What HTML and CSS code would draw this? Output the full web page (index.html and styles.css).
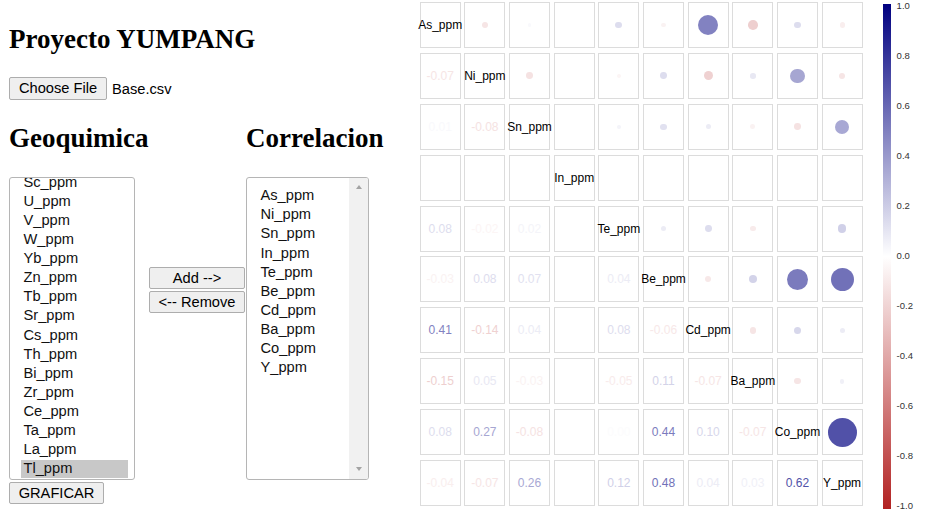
FILE: index.html
```html
<!DOCTYPE html>
<html lang="es">
<head>
<meta charset="utf-8">
<title>Proyecto YUMPANG</title>
<link rel="stylesheet" href="styles.css">
</head>
<body>
<div class="page">
  <div class="left">
    <h1 class="title">Proyecto YUMPANG</h1>
    <div class="file-row">
      <button class="btn btn-file">Choose File</button>
      <span class="file-name">Base.csv</span>
    </div>
    <div class="panel">
      <h2 class="heading">Geoquimica</h2>
      <div></div>
      <h2 class="heading">Correlacion</h2>

      <div class="listbox listbox-left">
        <ul class="options">
          <li class="opt">Sc_ppm</li>
          <li class="opt">U_ppm</li>
          <li class="opt">V_ppm</li>
          <li class="opt">W_ppm</li>
          <li class="opt">Yb_ppm</li>
          <li class="opt">Zn_ppm</li>
          <li class="opt">Tb_ppm</li>
          <li class="opt">Sr_ppm</li>
          <li class="opt">Cs_ppm</li>
          <li class="opt">Th_ppm</li>
          <li class="opt">Bi_ppm</li>
          <li class="opt">Zr_ppm</li>
          <li class="opt">Ce_ppm</li>
          <li class="opt">Ta_ppm</li>
          <li class="opt">La_ppm</li>
          <li class="opt selected">Tl_ppm</li>
        </ul>
      </div>
      <div class="actions">
        <button class="btn btn-action">Add --&gt;</button>
        <button class="btn btn-action">&lt;-- Remove</button>
      </div>
      <div class="listbox listbox-right">
        <ul class="options">
          <li class="opt">As_ppm</li>
          <li class="opt">Ni_ppm</li>
          <li class="opt">Sn_ppm</li>
          <li class="opt">In_ppm</li>
          <li class="opt">Te_ppm</li>
          <li class="opt">Be_ppm</li>
          <li class="opt">Cd_ppm</li>
          <li class="opt">Ba_ppm</li>
          <li class="opt">Co_ppm</li>
          <li class="opt">Y_ppm</li>
        </ul>
        <div class="scrollbar">
          <span class="arrow-up"></span>
          <span class="arrow-down"></span>
        </div>
      </div>

      <button class="btn btn-plot">GRAFICAR</button>
    </div>
  </div>

  <div class="chart">
    <div class="matrix">
      <!-- row 0: As -->
      <div class="cell"><span class="lbl">As_ppm</span></div>
      <div class="cell"><span class="dot" style="--d:6.4px;--c:rgb(246,229,229)"></span></div>
      <div class="cell"><span class="dot" style="--d:3.9px;--c:rgb(249,249,252)"></span></div>
      <div class="cell"></div>
      <div class="cell"><span class="dot" style="--d:6.8px;--c:rgb(221,221,238)"></span></div>
      <div class="cell"><span class="dot" style="--d:4.7px;--c:rgb(250,242,242)"></span></div>
      <div class="cell"><span class="dot" style="--d:20.3px;--c:rgb(130,130,193)"></span></div>
      <div class="cell"><span class="dot" style="--d:9.7px;--c:rgb(238,207,207)"></span></div>
      <div class="cell"><span class="dot" style="--d:6.8px;--c:rgb(221,221,238)"></span></div>
      <div class="cell"><span class="dot" style="--d:5.1px;--c:rgb(249,238,238)"></span></div>
      <!-- row 1: Ni -->
      <div class="cell"><span class="num" style="--c:rgb(246,229,229)">-0.07</span></div>
      <div class="cell"><span class="lbl">Ni_ppm</span></div>
      <div class="cell"><span class="dot" style="--d:6.8px;--c:rgb(245,226,226)"></span></div>
      <div class="cell"></div>
      <div class="cell"><span class="dot" style="--d:4.3px;--c:rgb(252,245,245)"></span></div>
      <div class="cell"><span class="dot" style="--d:6.8px;--c:rgb(221,221,238)"></span></div>
      <div class="cell"><span class="dot" style="--d:9.2px;--c:rgb(239,209,209)"></span></div>
      <div class="cell"><span class="dot" style="--d:5.6px;--c:rgb(232,232,243)"></span></div>
      <div class="cell"><span class="dot" style="--d:14.6px;--c:rgb(166,166,210)"></span></div>
      <div class="cell"><span class="dot" style="--d:6.4px;--c:rgb(246,229,229)"></span></div>
      <!-- row 2: Sn -->
      <div class="cell"><span class="num" style="--c:rgb(249,249,252)">0.01</span></div>
      <div class="cell"><span class="num" style="--c:rgb(245,226,226)">-0.08</span></div>
      <div class="cell"><span class="lbl">Sn_ppm</span></div>
      <div class="cell"></div>
      <div class="cell"><span class="dot" style="--d:4.3px;--c:rgb(244,244,249)"></span></div>
      <div class="cell"><span class="dot" style="--d:6.4px;--c:rgb(225,225,240)"></span></div>
      <div class="cell"><span class="dot" style="--d:5.1px;--c:rgb(236,236,245)"></span></div>
      <div class="cell"><span class="dot" style="--d:4.7px;--c:rgb(250,242,242)"></span></div>
      <div class="cell"><span class="dot" style="--d:6.8px;--c:rgb(245,226,226)"></span></div>
      <div class="cell"><span class="dot" style="--d:14.2px;--c:rgb(168,168,212)"></span></div>
      <!-- row 3: In -->
      <div class="cell"></div>
      <div class="cell"></div>
      <div class="cell"></div>
      <div class="cell"><span class="lbl">In_ppm</span></div>
      <div class="cell"></div>
      <div class="cell"></div>
      <div class="cell"></div>
      <div class="cell"></div>
      <div class="cell"></div>
      <div class="cell"></div>
      <!-- row 4: Te -->
      <div class="cell"><span class="num" style="--c:rgb(221,221,238)">0.08</span></div>
      <div class="cell"><span class="num" style="--c:rgb(252,245,245)">-0.02</span></div>
      <div class="cell"><span class="num" style="--c:rgb(244,244,249)">0.02</span></div>
      <div class="cell"></div>
      <div class="cell"><span class="lbl">Te_ppm</span></div>
      <div class="cell"><span class="dot" style="--d:5.1px;--c:rgb(236,236,245)"></span></div>
      <div class="cell"><span class="dot" style="--d:6.8px;--c:rgb(221,221,238)"></span></div>
      <div class="cell"><span class="dot" style="--d:5.6px;--c:rgb(248,235,235)"></span></div>
      <div class="cell"></div>
      <div class="cell"><span class="dot" style="--d:8.4px;--c:rgb(208,208,232)"></span></div>
      <!-- row 5: Be -->
      <div class="cell"><span class="num" style="--c:rgb(250,242,242)">-0.03</span></div>
      <div class="cell"><span class="num" style="--c:rgb(221,221,238)">0.08</span></div>
      <div class="cell"><span class="num" style="--c:rgb(225,225,240)">0.07</span></div>
      <div class="cell"></div>
      <div class="cell"><span class="num" style="--c:rgb(236,236,245)">0.04</span></div>
      <div class="cell"><span class="lbl">Be_ppm</span></div>
      <div class="cell"><span class="dot" style="--d:6px;--c:rgb(247,232,232)"></span></div>
      <div class="cell"><span class="dot" style="--d:8px;--c:rgb(211,211,233)"></span></div>
      <div class="cell"><span class="dot" style="--d:21.5px;--c:rgb(123,123,189)"></span></div>
      <div class="cell"><span class="dot" style="--d:23.2px;--c:rgb(113,113,184)"></span></div>
      <!-- row 6: Cd -->
      <div class="cell"><span class="num" style="--c:rgb(130,130,193)">0.41</span></div>
      <div class="cell"><span class="num" style="--c:rgb(239,209,209)">-0.14</span></div>
      <div class="cell"><span class="num" style="--c:rgb(236,236,245)">0.04</span></div>
      <div class="cell"></div>
      <div class="cell"><span class="num" style="--c:rgb(221,221,238)">0.08</span></div>
      <div class="cell"><span class="num" style="--c:rgb(247,232,232)">-0.06</span></div>
      <div class="cell"><span class="lbl">Cd_ppm</span></div>
      <div class="cell"><span class="dot" style="--d:6.4px;--c:rgb(246,229,229)"></span></div>
      <div class="cell"><span class="dot" style="--d:7.6px;--c:rgb(215,215,235)"></span></div>
      <div class="cell"><span class="dot" style="--d:5.1px;--c:rgb(236,236,245)"></span></div>
      <!-- row 7: Ba -->
      <div class="cell"><span class="num" style="--c:rgb(238,207,207)">-0.15</span></div>
      <div class="cell"><span class="num" style="--c:rgb(232,232,243)">0.05</span></div>
      <div class="cell"><span class="num" style="--c:rgb(250,242,242)">-0.03</span></div>
      <div class="cell"></div>
      <div class="cell"><span class="num" style="--c:rgb(248,235,235)">-0.05</span></div>
      <div class="cell"><span class="num" style="--c:rgb(211,211,233)">0.11</span></div>
      <div class="cell"><span class="num" style="--c:rgb(246,229,229)">-0.07</span></div>
      <div class="cell"><span class="lbl">Ba_ppm</span></div>
      <div class="cell"><span class="dot" style="--d:6.4px;--c:rgb(246,229,229)"></span></div>
      <div class="cell"><span class="dot" style="--d:4.7px;--c:rgb(240,240,247)"></span></div>
      <!-- row 8: Co -->
      <div class="cell"><span class="num" style="--c:rgb(221,221,238)">0.08</span></div>
      <div class="cell"><span class="num" style="--c:rgb(166,166,210)">0.27</span></div>
      <div class="cell"><span class="num" style="--c:rgb(245,226,226)">-0.08</span></div>
      <div class="cell"></div>
      <div class="cell"><span class="num" style="--c:rgb(252,252,253)">0.00</span></div>
      <div class="cell"><span class="num" style="--c:rgb(123,123,189)">0.44</span></div>
      <div class="cell"><span class="num" style="--c:rgb(215,215,235)">0.10</span></div>
      <div class="cell"><span class="num" style="--c:rgb(246,229,229)">-0.07</span></div>
      <div class="cell"><span class="lbl">Co_ppm</span></div>
      <div class="cell"><span class="dot" style="--d:28.9px;--c:rgb(81,81,168)"></span></div>
      <!-- row 9: Y -->
      <div class="cell"><span class="num" style="--c:rgb(249,238,238)">-0.04</span></div>
      <div class="cell"><span class="num" style="--c:rgb(246,229,229)">-0.07</span></div>
      <div class="cell"><span class="num" style="--c:rgb(168,168,212)">0.26</span></div>
      <div class="cell"></div>
      <div class="cell"><span class="num" style="--c:rgb(208,208,232)">0.12</span></div>
      <div class="cell"><span class="num" style="--c:rgb(113,113,184)">0.48</span></div>
      <div class="cell"><span class="num" style="--c:rgb(236,236,245)">0.04</span></div>
      <div class="cell"><span class="num" style="--c:rgb(240,240,247)">0.03</span></div>
      <div class="cell"><span class="num" style="--c:rgb(81,81,168)">0.62</span></div>
      <div class="cell"><span class="lbl">Y_ppm</span></div>
    </div>

    <div class="legend">
      <div class="legend-bar"></div>
      <div class="legend-labels">
        <span>1.0</span>
        <span>0.8</span>
        <span>0.6</span>
        <span>0.4</span>
        <span>0.2</span>
        <span>0.0</span>
        <span>-0.2</span>
        <span>-0.4</span>
        <span>-0.6</span>
        <span>-0.8</span>
        <span>-1.0</span>
      </div>
    </div>
  </div>
</div>
</body>
</html>
```

FILE: styles.css
```css
* { box-sizing: border-box; }

html, body {
  margin: 0;
  padding: 0;
  background: #fff;
}

body {
  width: 928px;
  height: 522px;
  overflow: hidden;
  font-family: "Liberation Sans", Arial, sans-serif;
  color: #000;
}

.page {
  display: flex;
  align-items: flex-start;
}

/* ---------- left form ---------- */
.left {
  width: 419.7px;
  flex: none;
  padding-left: 9px;
}

.title {
  margin: 24px 0 0;
  font: bold 27px/30px "Liberation Serif", "Times New Roman", serif;
  white-space: nowrap;
}

.file-row {
  margin-top: 23px;
  height: 23px;
  display: flex;
  align-items: center;
  gap: 5px;
  font-size: 14.67px;
}

.btn {
  font: 14.67px/1 "Liberation Sans", Arial, sans-serif;
  color: #000;
  background: #efefef;
  border: 1px solid #adadad;
  border-radius: 2px;
  padding: 0;
  display: flex;
  align-items: center;
  justify-content: center;
  white-space: nowrap;
}

.btn-file {
  width: 98px;
  height: 23px;
}

.panel {
  margin-top: 23px;
  display: grid;
  grid-template-columns: 126px 111px 123px;
  align-items: start;
}

.heading {
  margin: 0 0 24px;
  font: bold 27px/30px "Liberation Serif", "Times New Roman", serif;
  white-space: nowrap;
}

.listbox {
  height: 303px;
  border: 1px solid #b5b5b5;
  border-radius: 3px;
  overflow: hidden;
  background: #fff;
}

.options {
  list-style: none;
  margin: 0;
  padding: 0;
}

.opt {
  height: 17.6px;
  line-height: 17.6px;
  margin-bottom: 1.54px;
  padding-left: 2.5px;
  font-size: 14.67px;
  white-space: nowrap;
  color: #111;
}

.opt.selected {
  background: #c8c8c8;
}

.listbox-left {
  padding: 0 6px 0 11px;
}

.listbox-left .options {
  margin-top: -4.4px;
}

.listbox-right {
  display: flex;
}

.listbox-right .options {
  flex: 1;
  padding: 9.2px 0 0 11px;
}

.scrollbar {
  width: 19px;
  flex: none;
  background: #f1f1f1;
  display: flex;
  flex-direction: column;
  justify-content: space-between;
  align-items: center;
  padding: 7.3px 0 7.7px;
}

.arrow-up,
.arrow-down {
  width: 0;
  height: 0;
  border-left: 3.5px solid transparent;
  border-right: 3.5px solid transparent;
}

.arrow-up { border-bottom: 4px solid #a3a3a3; }
.arrow-down { border-top: 4px solid #a3a3a3; }

.actions {
  margin: 90px 0 0 14px;
  width: 96px;
  display: flex;
  flex-direction: column;
  gap: 2px;
}

.btn-action {
  width: 96px;
  height: 22px;
}

.btn-plot {
  margin-top: 2px;
  width: 95px;
  height: 22px;
}

/* ---------- correlation chart ---------- */
.chart {
  display: flex;
  align-items: flex-start;
  padding-top: 2px;
}

.matrix {
  display: grid;
  grid-template-columns: repeat(10, 41px);
  grid-template-rows: repeat(10, 46px);
  column-gap: 3.67px;
  row-gap: 4.9px;
}

.cell {
  border: 1px solid #dcdcdc;
  display: flex;
  align-items: center;
  justify-content: center;
  font-size: 12px;
  white-space: nowrap;
  overflow: visible;
}

.lbl { color: #000; }

.num { color: var(--c); }

.dot {
  flex: none;
  width: var(--d);
  height: var(--d);
  border-radius: 50%;
  background: var(--c);
}

.legend {
  margin: -2px 0 0 20px;
  display: flex;
}

.legend-bar {
  width: 8px;
  height: 504.7px;
  margin-top: 4.3px;
  background: linear-gradient(to bottom, #000080 0%, #ffffff 50%, #b22222 100%);
}

.legend-labels {
  margin-left: 6px;
  height: 511px;
  display: flex;
  flex-direction: column;
  justify-content: space-between;
  font-size: 9.5px;
  line-height: 11px;
  color: #333;
}
```
